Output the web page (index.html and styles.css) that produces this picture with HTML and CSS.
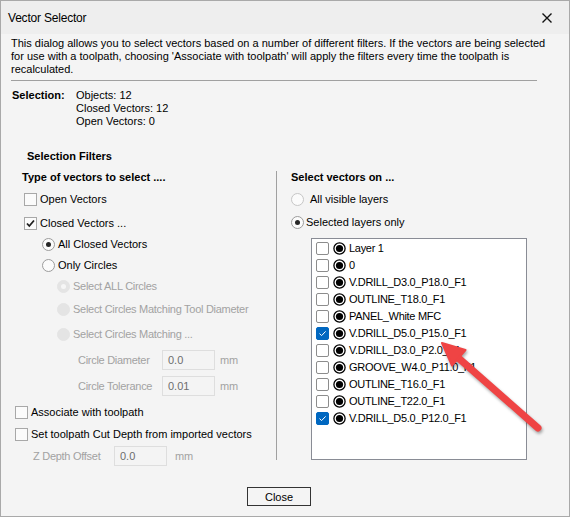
FILE: index.html
```html
<!DOCTYPE html>
<html lang="en">
<head>
    <meta charset="UTF-8">
    <meta name="viewport" content="width=device-width, initial-scale=1.0">
    <title>Vector Selector</title>
    <link rel="stylesheet" href="styles.css">
</head>
<body>
    <div class="window">
        <div class="titlebar">
            <span class="title">Vector Selector</span>
            <svg class="close-x" width="10" height="10" viewBox="0 0 10 10">
                <path d="M0.5 0.5 L9.5 9.5 M9.5 0.5 L0.5 9.5" stroke="#111" stroke-width="1.4"/>
            </svg>
        </div>

        <div class="content">
            <p class="intro">This dialog allows you to select vectors based on a number of different filters. If the vectors are being selected<br>for use with a toolpath, choosing 'Associate with toolpath' will apply the filters every time the toolpath is<br>recalculated.</p>
            <div class="rule"></div>

            <div class="selection">
                <span class="sel-label">Selection:</span>
                <div class="sel-values">
                    <div>Objects: 12</div>
                    <div>Closed Vectors: 12</div>
                    <div>Open Vectors: 0</div>
                </div>
            </div>

            <h3 class="group-title">Selection Filters</h3>

            <div class="filters">
                <!-- left: vector type options -->
                <div class="col-left">
                    <h4 class="col-title">Type of vectors to select ....</h4>
                    <div class="row in-1 mt-5"><span class="check"></span>Open Vectors</div>
                    <div class="row in-1 mt-4">
                        <span class="check">
                            <svg width="11" height="11" viewBox="0 0 11 11"><path d="M2 5.5 L4.3 8 L9 2.5" fill="none" stroke="#1e1e1e" stroke-width="1.8"/></svg>
                        </span>Closed Vectors ...
                    </div>
                    <div class="row in-2"><span class="radio on"></span>All Closed Vectors</div>
                    <div class="row in-2"><span class="radio"></span>Only Circles</div>
                    <div class="row in-3 dim"><span class="radio off on"></span>Select ALL Circles</div>
                    <div class="row in-3 dim mt-3"><span class="radio off"></span>Select Circles Matching Tool Diameter</div>
                    <div class="row in-3 dim mt-5"><span class="radio off"></span>Select Circles Matching ...</div>
                    <div class="row field in-4 dim mt-6">
                        <span class="field-label">Circle Diameter</span>
                        <span class="input">0.0</span>
                        <span class="unit">mm</span>
                    </div>
                    <div class="row field in-4 dim mt-6">
                        <span class="field-label">Circle Tolerance</span>
                        <span class="input">0.01</span>
                        <span class="unit">mm</span>
                    </div>
                    <div class="row in-0 mt-6"><span class="check"></span>Associate with toolpath</div>
                    <div class="row in-0 mt-2"><span class="check"></span>Set toolpath Cut Depth from imported vectors</div>
                    <div class="row field depth dim mt-2">
                        <span class="field-label">Z Depth Offset</span>
                        <span class="input">0.0</span>
                        <span class="unit">mm</span>
                    </div>
                </div>

                <!-- right: layer choice -->
                <div class="col-right">
                    <h4 class="col-title">Select vectors on ...</h4>
                    <div class="row mt-5"><span class="radio pale"></span><span class="gap-wide">All visible layers</span></div>
                    <div class="row mt-3"><span class="radio on"></span><span class="gap-tight">Selected layers only</span></div>
                    <div class="layer-list" id="layerList"></div>
                </div>
            </div>

            <div class="footer">
                <button class="btn">Close</button>
            </div>
        </div>

        <svg class="arrow" width="570" height="517" viewBox="0 0 570 517">
            <line x1="538" y1="428" x2="455" y2="355" stroke="#ef4444" stroke-width="7" stroke-linecap="round"/>
            <polygon points="442,343 465.5,350 452,365.5" fill="#ef4444" stroke="#ef4444" stroke-width="2" stroke-linejoin="round"/>
        </svg>
    </div>

    <script>
        const layers = [
            ["Layer 1", false],
            ["0", false],
            ["V.DRILL_D3.0_P18.0_F1", false],
            ["OUTLINE_T18.0_F1", false],
            ["PANEL_White MFC", false],
            ["V.DRILL_D5.0_P15.0_F1", true],
            ["V.DRILL_D3.0_P2.0_F1", false],
            ["GROOVE_W4.0_P11.0_F1", false],
            ["OUTLINE_T16.0_F1", false],
            ["OUTLINE_T22.0_F1", false],
            ["V.DRILL_D5.0_P12.0_F1", true]
        ];

        const tick = '<svg width="9" height="9" viewBox="0 0 9 9"><path d="M1.5 4.6 L3.6 6.6 L7.6 2.4" fill="none" stroke="#fff" stroke-width="1"/></svg>';
        const dot = '<svg width="13" height="13" viewBox="0 0 13 13"><circle cx="6.5" cy="6.5" r="5.6" fill="#fff" stroke="#000" stroke-width="1.3"/><circle cx="6.5" cy="6.5" r="3.6" fill="#000"/></svg>';

        let list = document.getElementById("layerList");
        list.innerHTML = layers.map(([name, on]) =>
            `<div class="layer"><span class="lbox${on ? ' on' : ''}">${on ? tick : ''}</span>${dot}<span class="lname">${name}</span></div>`
        ).join("");
    </script>
</body>
</html>
```

FILE: styles.css
```css
* {
    box-sizing: border-box;
}
body {
    margin: 0;
    font-family: "Liberation Sans", Arial, sans-serif;
    font-size: 11px;
    color: #000;
    background: #fff;
}
.window {
    position: relative;
    width: 570px;
    height: 517px;
    border: 1px solid #a9a9a9;
    background: #f4f4f4;
    display: flex;
    flex-direction: column;
}
.titlebar {
    height: 33px;
    background: #eeeeee;
    display: flex;
    align-items: center;
    justify-content: space-between;
    padding: 0 17px 0 7px;
    font-size: 12px;
    letter-spacing: -0.2px;
}
.close-x {
    display: block;
}
.content {
    padding: 3px 0 0 10px;
    line-height: 13px;
}
.intro {
    margin: 0;
    white-space: nowrap;
}
.rule {
    width: 526px;
    height: 1px;
    margin-top: 4px;
    background: #a0a0a0;
}
.selection {
    display: flex;
    margin-top: 8px;
}
.sel-label {
    width: 65px;
    padding-left: 1px;
    font-weight: bold;
}
.group-title, .col-title {
    margin: 0;
    font-size: 11px;
    font-weight: bold;
    line-height: 13px;
}
.group-title {
    margin: 22px 0 0 16px;
}
.filters {
    display: flex;
    align-items: flex-start;
    margin-top: 8px;
}
.col-left {
    width: 265px;
}
.col-left .col-title {
    margin-left: 11px;
}
.col-right {
    border-left: 1px solid #a0a0a0;
    padding-left: 14px;
}

/* option rows */
.row {
    display: flex;
    align-items: center;
    height: 20px;
    margin-top: 1px;
    white-space: nowrap;
}
.mt-2 { margin-top: 2px; }
.mt-3 { margin-top: 3px; }
.mt-4 { margin-top: 4px; }
.mt-5 { margin-top: 5px; }
.mt-6 { margin-top: 6px; }
.in-0 { margin-left: 4px; }
.in-1 { margin-left: 13px; }
.in-2 { margin-left: 31px; }
.in-3 { margin-left: 46px; }
.in-4 { margin-left: 67px; }
.dim {
    color: #a2a2a2;
    letter-spacing: -0.28px;
}

.check, .radio {
    flex: none;
    width: 13px;
    height: 13px;
    margin-right: 3px;
    border: 1px solid #a8a8a8;
    background: #fbfbfb;
    display: flex;
    align-items: center;
    justify-content: center;
}
.radio {
    position: relative;
    border-radius: 50%;
    border-color: #9c9c9c;
}
.radio.on::after {
    content: "";
    width: 5px;
    height: 5px;
    border-radius: 50%;
    background: #262626;
}
.radio.off {
    background: #e4e4e4;
    border-color: #e4e4e4;
}
.radio.off.on::after {
    background: #f6f6f6;
}
.radio.pale {
    border-color: #c6c6c6;
}
.gap-wide {
    margin-left: 3px;
}
.gap-tight {
    margin-left: -1px;
}

/* disabled number fields */
.field-label {
    width: 84px;
}
.input {
    width: 53px;
    height: 20px;
    padding-left: 5px;
    line-height: 18px;
    border: 1px solid #dedede;
    color: #6d6d6d;
    letter-spacing: 0;
}
.unit {
    margin-left: 5px;
}
.depth {
    margin-left: 22px;
}
.depth .field-label {
    width: 81px;
}
.depth .unit {
    margin-left: 8px;
}

/* layer list */
.layer-list {
    width: 216px;
    height: 222px;
    margin: 6px 0 0 20px;
    padding: 1px 0 0 4px;
    border: 1px solid #898c95;
    background: #fff;
}
.layer {
    display: flex;
    align-items: center;
    height: 17px;
    white-space: nowrap;
}
.layer svg {
    display: block;
}
.lbox {
    width: 13px;
    height: 13px;
    margin-right: 4px;
    border: 1px solid #8c8c8c;
    border-radius: 2px;
    background: #fff;
    display: flex;
    align-items: center;
    justify-content: center;
}
.lbox.on {
    background: #0067c0;
    border-color: #0067c0;
}
.lname {
    margin-left: 3px;
    letter-spacing: -0.3px;
}

.footer {
    padding: 21px 0 0 236px;
}
.btn {
    width: 64px;
    height: 19px;
    padding: 0;
    font-family: "Liberation Sans", Arial, sans-serif;
    font-size: 11px;
    color: #000;
    background: #f4f4f4;
    border: 1px solid #333;
    border-radius: 0;
}

.arrow {
    position: absolute;
    left: -1px;
    top: -1px;
    pointer-events: none;
    filter: drop-shadow(1px 2px 1.5px rgba(0, 0, 0, 0.35));
}
```
